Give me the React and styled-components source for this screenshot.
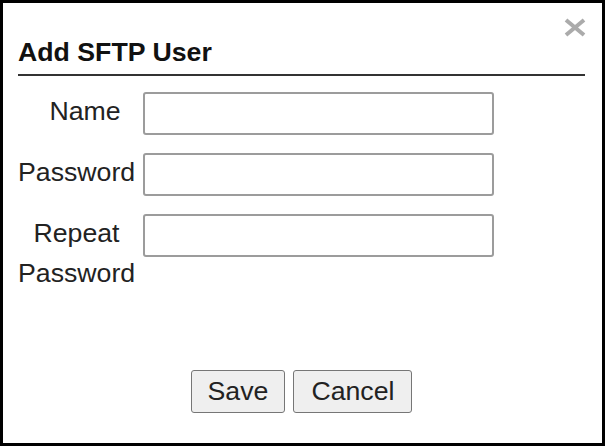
import React from 'react';
import styled, { createGlobalStyle } from 'styled-components';

const GlobalStyle = createGlobalStyle`
  html, body {
    margin: 0;
    padding: 0;
    background: #fff;
  }
  body {
    font-family: "Liberation Sans", Arial, sans-serif;
  }
`;

const Dialog = styled.div`
  position: relative;
  box-sizing: border-box;
  width: 605px;
  height: 446px;
  border: 3px solid #000;
  background: #fff;
  padding: 34px 17px 30px 15px;
  display: flex;
  flex-direction: column;
  font-family: "Liberation Sans", Arial, sans-serif;
  font-size: 26.7px;
  color: #222;
`;

const CloseButton = styled.button`
  position: absolute;
  top: 13px;
  right: 14px;
  width: 26px;
  height: 22px;
  padding: 0;
  border: none;
  background: transparent;
  display: flex;
  align-items: center;
  justify-content: center;
  cursor: pointer;
`;

const Title = styled.h2`
  margin: 0;
  padding-bottom: 6px;
  border-bottom: 2px solid #333;
  font-size: 26.7px;
  font-weight: bold;
  line-height: normal;
  color: #111;
`;

const Form = styled.form`
  display: grid;
  grid-template-columns: 117px 351px;
  column-gap: 8px;
  row-gap: 17px;
  align-items: start;
  margin-top: 15px;
`;

const Label = styled.label`
  text-align: center;
  line-height: 40px;
  padding-left: ${(p) => p.$shift || 0}px;
  color: #222;
`;

const Input = styled.input`
  box-sizing: border-box;
  width: 351px;
  height: 43px;
  margin-top: 1px;
  border: 2px solid #9c9c9c;
  border-radius: 3px;
  background: #fff;
  font-family: inherit;
  font-size: 20px;
  padding: 0 6px;
`;

const Footer = styled.div`
  margin-top: auto;
  display: flex;
  justify-content: center;
  gap: 8px;
`;

const Button = styled.button`
  box-sizing: border-box;
  height: 43px;
  padding: 0 ${(p) => p.$pad || 16}px;
  border: 1px solid #767676;
  border-radius: 3px;
  background: #efefef;
  font-family: "Liberation Sans", Arial, sans-serif;
  font-size: 26.7px;
  color: #222;
  cursor: pointer;
`;

const App = () => {
  return (
    <>
      <GlobalStyle />
      <Dialog>
        <CloseButton aria-label="Close">
          <svg width="24" height="19" viewBox="0 0 24 19">
            <line x1="3" y1="2" x2="21" y2="17" stroke="#ababab" strokeWidth="4" />
            <line x1="21" y1="2" x2="3" y2="17" stroke="#ababab" strokeWidth="4" />
          </svg>
        </CloseButton>
        <Title>Add SFTP User</Title>
        <Form onSubmit={(e) => e.preventDefault()}>
          <Label $shift={17}>Name</Label>
          <Input type="text" />
          <Label>Password</Label>
          <Input type="password" />
          <Label>Repeat Password</Label>
          <Input type="password" />
        </Form>
        <Footer>
          <Button type="button">Save</Button>
          <Button type="button" $pad={17}>Cancel</Button>
        </Footer>
      </Dialog>
    </>
  );
};

export default App;
